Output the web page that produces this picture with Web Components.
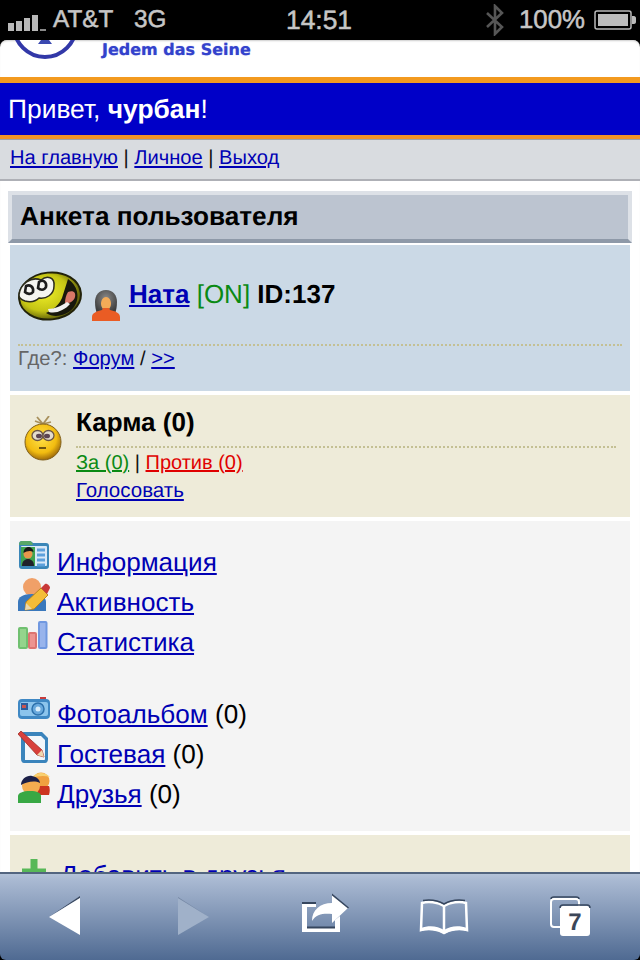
<!DOCTYPE html>
<html lang="ru">
<head>
<meta charset="utf-8">
<title>Анкета пользователя</title>
<style>
	html, body { margin: 0; padding: 0; background: #000; }
	body { width: 640px; height: 960px; overflow: hidden; font-family: "Liberation Sans", Arial, sans-serif; text-rendering: geometricPrecision; }
	a { color: #0000b4; text-decoration: underline; }
	a.green { color: #0a8a14; }
	a.red { color: #e00000; }
</style>
</head>
<body>
<phone-screen>
	<status-bar slot="top"></status-bar>
	<logo-strip></logo-strip>
	<greeting-bar>Привет, <b>чурбан</b>!</greeting-bar>
	<nav-bar><a href="#">На главную</a> | <a href="#">Личное</a> | <a href="#">Выход</a></nav-bar>
	<title-bar>Анкета пользователя</title-bar>
	<profile-card>
		<site-icon slot="avatar" name="smiley" size="64" height="50"></site-icon>
		<site-icon slot="avatar" name="woman" size="28" height="31"></site-icon>
		<span slot="name"><a href="#"><b>Ната</b></a> <span style="color:#0a8a14">[ON]</span> <b>ID:137</b></span>
		<span style="color:#666">Где?:</span> <a href="#">Форум</a> / <a href="#">&gt;&gt;</a>
	</profile-card>
	<karma-card>
		<site-icon slot="icon" name="karma" size="38" height="45"></site-icon>
		<span slot="title">Карма (0)</span>
		<div><a class="green" href="#">За (0)</a> | <a class="red" href="#">Против (0)</a></div>
		<div style="font-size:20.500px"><a href="#">Голосовать</a></div>
	</karma-card>
	<menu-card>
		<menu-row icon="info" w="32" h="28" drop="13"><a href="#">Информация</a></menu-row>
		<menu-row icon="activity" w="32" h="33" drop="11"><a href="#">Активность</a></menu-row>
		<menu-row icon="stats" w="30" h="28" drop="13"><a href="#">Статистика</a></menu-row>
		<menu-gap></menu-gap>
		<menu-row icon="photo" w="32" h="22" drop="15"><a href="#">Фотоальбом</a> (0)</menu-row>
		<menu-row icon="guest" w="31" h="32" drop="11"><a href="#">Гостевая</a> (0)</menu-row>
		<menu-row icon="friends" w="32" h="31" drop="11"><a href="#">Друзья</a> (0)</menu-row>
	</menu-card>
	<add-card><site-icon name="plus" size="24" height="26"></site-icon><a href="#">Добавить в друзья</a></add-card>
	<browser-toolbar slot="bottom"></browser-toolbar>
</phone-screen>

<script>
// Small drawn icons, all of them low-res pictures in the original
const ICONS = {
	smiley: `<svg viewBox="0 0 64 50"><defs><radialGradient id="g" cx=".42" cy=".42" r=".62"><stop offset="0" stop-color="#eeee28"/><stop offset=".62" stop-color="#c4c414"/><stop offset="1" stop-color="#4c4c08"/></radialGradient></defs>
		<ellipse cx="32" cy="25" rx="31" ry="23.500" transform="rotate(-6 32 25)" fill="url(#g)" stroke="#22220a" stroke-width="2"/>
		<path d="M1 24C2 13 13 5 23 9c6-5 14-3 13 6 0 9-8 13-15 12-4 4-10 4-14 3-3-1-6-3-6-6z" fill="#f4f4f0" stroke="#2c2c1c" stroke-width="1.500"/>
		<path d="M8 15c4-2 8 1 7 6-2 3-6 2-8 0z" fill="none" stroke="#1c1c1c" stroke-width="2.600"/>
		<path d="M21 11c4-3 8 0 7 5-2 4-6 3-8 1z" fill="none" stroke="#1c1c1c" stroke-width="2.600"/>
		<path d="M50 8C59 14 63 26 56 36c-6 8-19 12-28 6 7-3 13-8 16-15 2-6 4-13 6-19z" fill="#18180c"/>
		<path d="M50 21c5-2 8 0 7 5-1 4-6 7-10 6 0-4 1-8 3-11z" fill="#d87868"/>
		<path d="M30 38c7 0 13-3 19-7l3 2c-5 6-14 10-21 8z" fill="#f0f0f0"/></svg>`,
	woman: `<svg viewBox="0 0 28 31"><defs><radialGradient id="h" cx=".5" cy=".35" r=".6"><stop offset="0" stop-color="#8a8a8a"/><stop offset="1" stop-color="#3e3e3e"/></radialGradient></defs>
		<path d="M14 0c7 0 11 5 11 12 0 5-1 9-2 12H5c-1-3-2-7-2-12C3 5 7 0 14 0z" fill="url(#h)"/>
		<path d="M14 7c3 0 5 3 5 7 0 3-2 5-3 6H12c-1-1-3-3-3-6 0-4 2-7 5-7z" fill="#f4ac58"/>
		<path d="M11 18h6l1 2c5 1 10 3 10 7v4H0v-4c0-4 5-6 10-7z" fill="#ea5c24"/></svg>`,
	karma: `<svg viewBox="0 0 38 45"><defs><radialGradient id="k" cx=".45" cy=".38" r=".65"><stop offset="0" stop-color="#ffe24a"/><stop offset=".65" stop-color="#f2bc10"/><stop offset="1" stop-color="#94600a"/></radialGradient></defs>
		<path d="M13 1l6 7 6-8M19 8l-8-3M19 8l8-2" fill="none" stroke="#a8905c" stroke-width="1.800"/>
		<circle cx="19" cy="26" r="18" fill="url(#k)" stroke="#80601c" stroke-width="1"/>
		<ellipse cx="13.500" cy="19.500" rx="5.500" ry="5" fill="#e4dccc" stroke="#6a5444" stroke-width="1.300"/>
		<ellipse cx="24.500" cy="19.500" rx="5.500" ry="5" fill="#e4dccc" stroke="#6a5444" stroke-width="1.300"/>
		<ellipse cx="15" cy="20" rx="3" ry="2.300" fill="#5c4452"/><ellipse cx="23" cy="20" rx="3" ry="2.300" fill="#5c4452"/>
		<path d="M15 32h7" stroke="#705410" stroke-width="2"/></svg>`,
	info: `<svg viewBox="0 0 32 28"><path d="M1 3c0-2 1-3 3-3h8c1 0 2 1 3 2h13c2 0 3 1 3 3v20c0 2-1 3-3 3H4c-2 0-3-1-3-3z" fill="#3a86b8"/>
		<path d="M1 4c0-2 1-4 3-4h8c1 0 2 1 3 4z" fill="#58a868"/>
		<rect x="3" y="5" width="26" height="20" rx="1" fill="#d8e8f8"/>
		<rect x="3" y="6" width="14" height="19" fill="#40a450"/>
		<circle cx="10" cy="13" r="4.500" fill="#e8964c"/><path d="M5.500 12c0-4 3-6 5-6s5 2 5 5c-3-2-7-1-10 1z" fill="#181818"/>
		<path d="M4 25c0-5 3-7 6-7s6 2 6 7z" fill="#20202a"/>
		<path d="M19 9h8M19 14h8M19 19h8M19 24h8" stroke="#5ca0dc" stroke-width="3"/></svg>`,
	activity: `<svg viewBox="0 0 32 33"><circle cx="14" cy="9" r="9" fill="#f0a068"/>
		<path d="M0 33V24c0-5 5-8 14-8s14 3 14 8v9z" fill="#3a78bc"/>
		<path d="M7 32l1-8 15-14 7 7-14 14z" fill="#f4bc38" stroke="#b88420" stroke-width="1"/>
		<path d="M23 10l4-4c2-1 5 2 5 4l-3 6z" fill="#c83838"/><path d="M7 32l1-7 6 6z" fill="#e8d8b0"/></svg>`,
	stats: `<svg viewBox="0 0 30 28"><rect x="1" y="7" width="8" height="20" rx="1" fill="#94d48c" stroke="#70c070" stroke-width="2"/>
		<rect x="11" y="12" width="7" height="15" rx="1" fill="#ec9490" stroke="#dc7470" stroke-width="2"/>
		<rect x="21" y="1" width="7.500" height="26" rx="1" fill="#98b4ec" stroke="#7098e0" stroke-width="2"/></svg>`,
	photo: `<svg viewBox="0 0 32 22"><rect x="22" y="0" width="6" height="3" fill="#c83c3c"/>
		<rect x="0" y="2" width="32" height="20" rx="4" fill="#3f88c4"/>
		<rect x="2" y="5" width="28" height="14" rx="2" fill="#8cc4ec"/>
		<rect x="3" y="6" width="7" height="7" fill="#2c5c9c"/><rect x="4" y="8" width="4" height="3" fill="#c85450"/>
		<circle cx="20" cy="12" r="6" fill="#68a8dc" stroke="#2c70ac" stroke-width="1.500"/><circle cx="20" cy="12" r="2.500" fill="#d8ecfa"/></svg>`,
	guest: `<svg viewBox="0 0 31 32"><path d="M6 1h18l6 6v21c0 2-1 4-3 4H6c-2 0-3-2-3-4V4c0-2 1-3 3-3z" fill="#3a84bc"/>
		<path d="M7 5h16l4 4v19c0 .6-.4 1-1 1H7z" fill="#f2f6fa"/>
		<path d="M0 3l3-3 21 19 2 7-7-2z" fill="#d8403c" stroke="#a03028" stroke-width=".8"/><path d="M19 24l5-5 2 7z" fill="#f0d8b0"/></svg>`,
	friends: `<svg viewBox="0 0 32 31"><circle cx="23" cy="9" r="8.500" fill="#f0a040"/><path d="M14 6c2-5 12-8 18-1-6-2-13-1-18 1z" fill="#f8d070"/>
		<path d="M12 14h19c1 2 1 6 0 9H12z" fill="#cc3420"/>
		<circle cx="13" cy="14" r="9" fill="#f4ac50"/><path d="M3 13c0-6 6-10 11-9s8 4 8 7c-6-3-13-1-19 2z" fill="#1c2048"/>
		<path d="M0 31v-7c0-3 5-5 12-5s11 2 11 5v7z" fill="#38a844"/></svg>`,
	plus: `<svg viewBox="0 0 24 26"><path d="M8.500 0h7v9.500H24v7h-8.500V26h-7v-9.500H0v-7h8.500z" fill="#58b858"/></svg>`
};

class SiteIcon extends HTMLElement {
	connectedCallback() {
		if(this.shadowRoot) return;
		let w = this.getAttribute('size') || 32;
		let h = this.getAttribute('height') || w;
		let shadow = this.attachShadow({mode: 'open'});
		shadow.innerHTML = `<style>
				:host { display: inline-block; width: ${w}px; height: ${h}px; line-height: 0; }
				svg { width: 100%; height: 100%; filter: blur(.4px); }
			</style>${ICONS[this.getAttribute('name')]}`;
	}
}

class PhoneScreen extends HTMLElement {
	constructor() {
		super();
		this.attachShadow({mode: 'open'}).innerHTML = `<style>
				:host { display: flex; flex-direction: column; width: 640px; height: 960px; background: #000; }
				#page { flex: 1; min-height: 0; overflow: hidden; background: #fff; border-radius: 7px 7px 0 0; box-shadow: inset 0 2px 2px -1px #ccc; }
			</style>
			<slot name="top"></slot>
			<div id="page"><slot></slot></div>
			<slot name="bottom"></slot>`;
	}
}

class StatusBar extends HTMLElement {
	constructor() {
		super();
		this.attachShadow({mode: 'open'}).innerHTML = `<style>
				:host { display: flex; align-items: center; height: 40px; box-sizing: border-box; padding: 0 0 0 8px; background: #000; color: #c6c6c6; font-size: 24.300px; -webkit-text-stroke: .5px #c6c6c6; white-space: nowrap; }
				.bars { width: 38px; height: 18px; margin: 3px 7px 0 0; }
				.carrier { width: 62px; }
				.net { width: 32px; margin-left: 19px; }
				.time { margin-left: 120px; font-size: 26.400px; width: 66px; }
				.bt { width: 18px; height: 32px; margin-left: 134px; }
				.pct { margin-left: 15px; font-size: 25.800px; width: 66px; }
				.bat { width: 42px; height: 20px; margin-left: 9px; }
			</style>
			<svg class="bars" viewBox="0 0 38 18"><path fill="#b8b8b8" d="M0 10h6v8H0zM8 8h6v10H8zM16 5h6v13h-6zM24 2h6v16h-6z"/><path fill="#8a8a8a" d="M32 16h6v2h-6z"/></svg>
			<span class="carrier">AT&amp;T</span><span class="net">3G</span><span class="time">14:51</span>
			<svg class="bt" viewBox="0 0 18 32"><path d="M1 9l15 14-7 7V2l7 7L1 23" fill="none" stroke="#565656" stroke-width="2.600"/></svg>
			<span class="pct">100%</span>
			<svg class="bat" viewBox="0 0 42 20"><rect x="1" y="1" width="36" height="18" rx="2" fill="none" stroke="#bbb" stroke-width="1.500"/><rect x="4" y="4" width="30" height="12" fill="#bdbdbd"/><path d="M38 6h2c1 0 2 1 2 2v4c0 1-1 2-2 2h-2z" fill="#bbb"/></svg>`;
	}
}

class LogoStrip extends HTMLElement {
	constructor() {
		super();
		this.attachShadow({mode: 'open'}).innerHTML = `<style>
				:host { display: flex; height: 37px; box-sizing: border-box; padding-left: 10px; font-family: "DejaVu Sans", sans-serif; }
				svg { width: 72px; height: 22px; filter: blur(.5px); }
				span { margin: 0 0 0 20px; font-size: 16px; line-height: 20px; height: 20px; font-weight: bold; color: #3342cc; text-shadow: 0 0 1px #8a94e8; }
			</style>
			<svg viewBox="0 0 72 22"><circle cx="35" cy="-14" r="31" fill="#fff" stroke="#3238a8" stroke-width="4"/><path d="M31 0h8l3 4H28z" fill="#3a48b0"/></svg>
			<span>Jedem das Seine</span>`;
	}
}

class GreetingBar extends HTMLElement {
	constructor() {
		super();
		this.attachShadow({mode: 'open'}).innerHTML = `<style>
				:host { display: block; background: #0000c8; color: #fff; border-top: 6px solid #f39a1f; border-bottom: 4px solid #ef9228; height: 52px; line-height: 52px; padding-left: 8px; font-size: 26.400px; }
			</style><slot></slot>`;
	}
}

class NavBar extends HTMLElement {
	constructor() {
		super();
		this.attachShadow({mode: 'open'}).innerHTML = `<style>
				:host { display: block; background: #d9dce0; border-top: 1px solid #a0a2a8; border-bottom: 2px solid #aeb0b6; height: 39px; line-height: 37px; padding-left: 10px; font-size: 20.100px; color: #111; margin-bottom: 10px; }
			</style><slot></slot>`;
	}
}

class TitleBar extends HTMLElement {
	constructor() {
		super();
		this.attachShadow({mode: 'open'}).innerHTML = `<style>
				:host { display: block; box-sizing: border-box; height: 52px; margin: 0 8px 2px; background: #bcc4d0; border-style: solid; border-color: #dde1e7 #dde1e7 #8e99a8 #dde1e7; border-width: 4px; line-height: 42px; padding-left: 8px; font-size: 26.200px; font-weight: bold; color: #000; }
			</style><slot></slot>`;
	}
}

class ProfileCard extends HTMLElement {
	constructor() {
		super();
		this.attachShadow({mode: 'open'}).innerHTML = `<style>
				:host { display: block; box-sizing: border-box; height: 146px; margin: 0 10px 4px; background: #cbd9e6; padding: 26px 8px 0; font-size: 20.200px; color: #111; }
				#top { display: flex; align-items: flex-start; height: 73px; border-bottom: 2px dotted #c4c094; }
				#avatar { display: flex; align-items: flex-end; gap: 10px; height: 50px; }
				#avatar ::slotted(site-icon:last-child) { margin-bottom: 3px; }
				#name { margin: 8px 0 0 9px; font-size: 26px; line-height: 30px; color: #000; }
				#where { line-height: 27px; }
			</style>
			<div id="top"><div id="avatar"><slot name="avatar"></slot></div><div id="name"><slot name="name"></slot></div></div>
			<div id="where"><slot></slot></div>`;
	}
}

class KarmaCard extends HTMLElement {
	constructor() {
		super();
		this.attachShadow({mode: 'open'}).innerHTML = `<style>
				:host { display: flex; box-sizing: border-box; height: 122px; margin: 0 10px 4px; background: #eeebd9; padding: 21px 14px 0 14px; font-size: 20px; line-height: 28px; color: #111; }
				#icon { width: 52px; flex: none; }
				#body { flex: 1; }
				#title { margin: -9px 0 1px; padding-bottom: 9px; border-bottom: 2px dotted #c4c094; font-size: 26px; line-height: 30px; font-weight: bold; color: #000; }
			</style>
			<div id="icon"><slot name="icon"></slot></div>
			<div id="body"><div id="title"><slot name="title"></slot></div><slot></slot></div>`;
	}
}

class MenuCard extends HTMLElement {
	constructor() {
		super();
		this.attachShadow({mode: 'open'}).innerHTML = `<style>
				:host { display: block; box-sizing: border-box; height: 310px; margin: 0 10px 4px; background: #f4f4f4; padding: 21px 8px 0; font-size: 26.100px; color: #000; }
			</style><slot></slot>`;
	}
}

class MenuRow extends HTMLElement {
	constructor() {
		super();
		let name = this.getAttribute('icon');
		this.attachShadow({mode: 'open'}).innerHTML = `<style>
				:host { display: flex; align-items: flex-end; height: 40px; line-height: 40px; }
				span { margin-left: ${39 - this.getAttribute('w')}px; }
				site-icon { flex: none; margin-bottom: ${this.getAttribute('drop')}px; }
			</style>
			<site-icon name="${name}" size="${this.getAttribute('w')}" height="${this.getAttribute('h')}"></site-icon><span><slot></slot></span>`;
	}
}

class MenuGap extends HTMLElement {
	constructor() {
		super();
		this.attachShadow({mode: 'open'}).innerHTML = `<style>:host { display: block; height: 32px; }</style>`;
	}
}

class AddCard extends HTMLElement {
	constructor() {
		super();
		this.attachShadow({mode: 'open'}).innerHTML = `<style>
				:host { display: flex; gap: 14px; height: 60px; margin: 0 10px; background: #eeebd9; padding: 24px 12px 0; box-sizing: border-box; font-size: 26.100px; line-height: 28px; }
				::slotted(a) { margin-top: 2px; }
			</style><slot></slot>`;
	}
}

class BrowserToolbar extends HTMLElement {
	constructor() {
		super();
		this.attachShadow({mode: 'open'}).innerHTML = `<style>
				:host { display: block; height: 88px; box-sizing: border-box; border-top: 2px solid #53657f; border-radius: 0 0 6px 6px; background: linear-gradient(#b4c3d9 0, #a9b9d2 6px, #4f6a92 100%); font-family: "Liberation Sans", sans-serif; }
				svg { display: block; width: 640px; height: 86px; }
			</style>
			<svg viewBox="0 874 640 86">
				<path d="M49 917L80 896v2L49 917z" fill="#3c4a60"/>
				<path d="M49 917L80 898v37z" fill="#fff"/>
				<path d="M178 898l31 19-31 18z" fill="#a0b1c9"/>
				<path d="M178 898v-1l31 20z" fill="#7688a4"/>

				<path d="M302 902h14v5h-9v20h28v-7l5-4v16h-38z" fill="#fff"/>
				<path d="M302 902h14v2h-14zM307 926.500h28v2h-28z" fill="#36465e"/>
				<path d="M332 895l16 13-16 15v-9c-8-1-16 0-20 7 0-11 8-18 20-18z" fill="#fff"/>
				<path d="M332 893.500l17 14-1 1-16-13z" fill="#36465e"/>

				<path d="M444 906c-6-4-16-5-22-3l-1 27c7-2 17-1 23 3 6-4 16-5 23-3l-1-27c-6-2-16-1-22 3z" fill="none" stroke="#fff" stroke-width="2.500"/>
				<path d="M421 928c8-3 17-2 23 2 6-4 15-5 23-2v3c-8-2-16-1-23 3-6-4-15-5-23-3z" fill="#fff"/>
				<path d="M423 900.500c7-1 15 0 21 3.500 6-3.500 14-4.500 21-3.500" fill="none" stroke="#36465e" stroke-width="1.500"/>
				<path d="M444 905v27" stroke="#fff" stroke-width="2.500"/>

				<rect x="551" y="899" width="28" height="28" rx="3" fill="none" stroke="#fff" stroke-width="2"/>
				<path d="M551 899c0-1 1-2 3-2h22c2 0 3 1 3 2" fill="none" stroke="#36465e" stroke-width="1.500"/>
				<rect x="560" y="906" width="30" height="30" rx="3" fill="#fff"/>
				<path d="M560 908c0-2 1-3 3-3h24c2 0 3 1 3 3" fill="none" stroke="#36465e" stroke-width="1.500"/>
				<text x="575" y="930" text-anchor="middle" font-size="24" font-weight="bold" fill="#3c4658">7</text>
			</svg>`;
	}
}

customElements.define('site-icon', SiteIcon);
customElements.define('phone-screen', PhoneScreen);
customElements.define('status-bar', StatusBar);
customElements.define('logo-strip', LogoStrip);
customElements.define('greeting-bar', GreetingBar);
customElements.define('nav-bar', NavBar);
customElements.define('title-bar', TitleBar);
customElements.define('profile-card', ProfileCard);
customElements.define('karma-card', KarmaCard);
customElements.define('menu-card', MenuCard);
customElements.define('menu-row', MenuRow);
customElements.define('menu-gap', MenuGap);
customElements.define('add-card', AddCard);
customElements.define('browser-toolbar', BrowserToolbar);
</script>
</body>
</html>
